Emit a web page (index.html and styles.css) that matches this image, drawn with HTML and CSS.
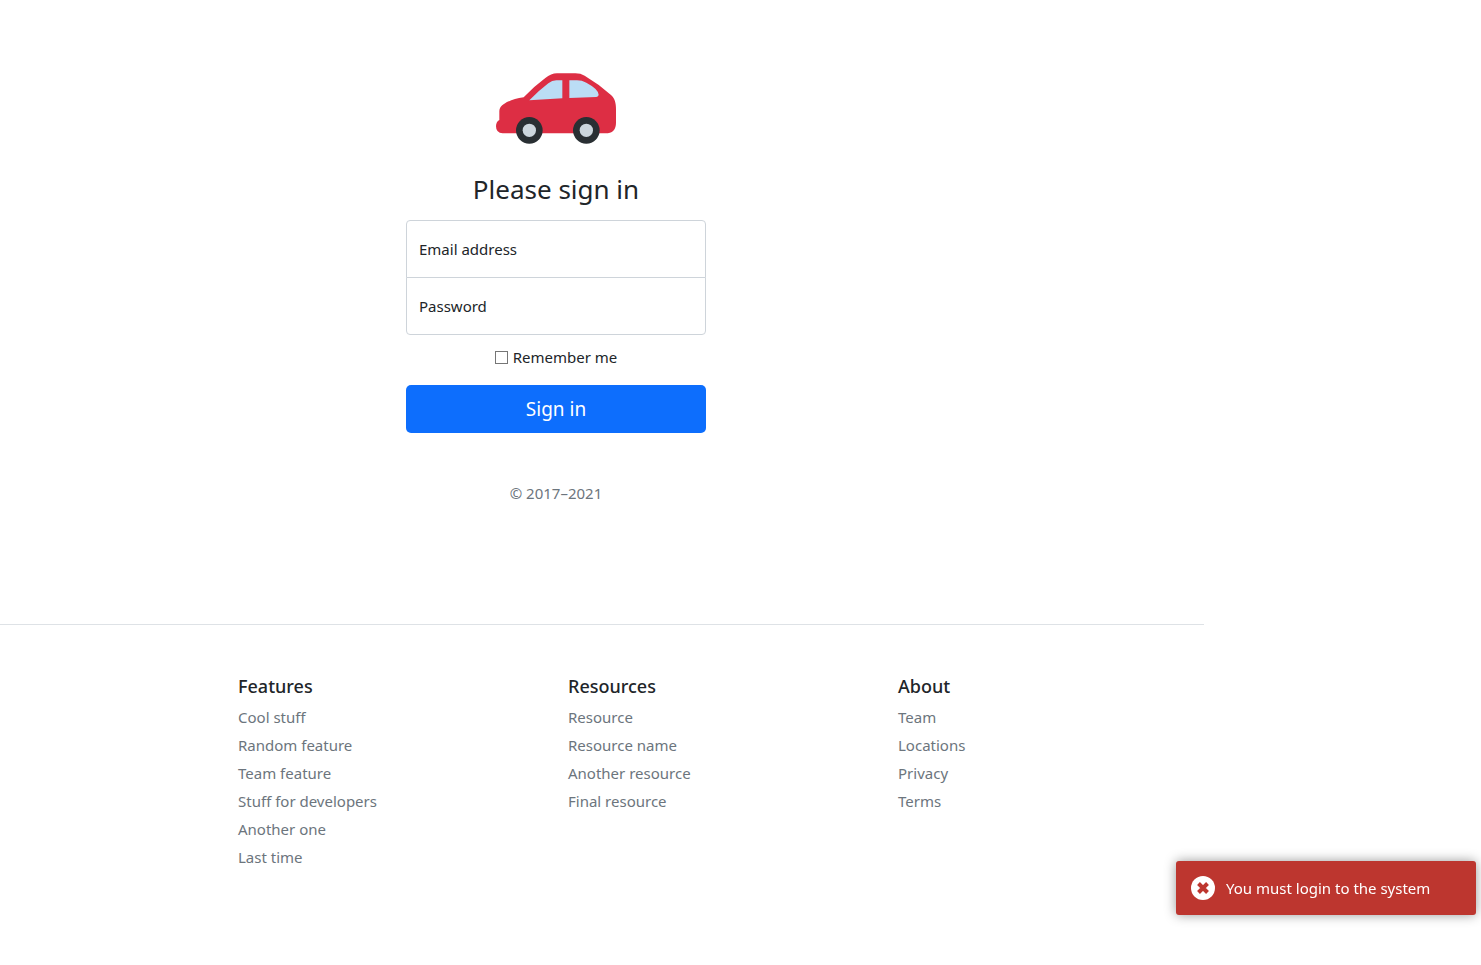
FILE: index.html
```html
<!DOCTYPE html>
<html lang="en">
<head>
<meta charset="utf-8">
<meta name="viewport" content="width=device-width, initial-scale=1">
<title>Sign in</title>
<link rel="stylesheet" href="styles.css">
</head>
<body>
<div class="page">
  <main class="signin">
    <form class="signin-form">
      <svg class="logo" viewBox="30 39 360 213" aria-hidden="true">
        <path fill="#dd2e44" d="M30 199Q30 185 40 180V153Q40 139 55 131Q75 118 113 112Q144 79 178 54Q195 40 213 40H268Q284 40 296 47Q337 71 374 104C386 114 390 128 390 148V188Q390 220 358 220H50Q30 219 30 199Z"/>
        <path fill="#bbddf5" d="M130 121Q158 92 187 70Q198 61 211 61H229V115ZM250 61H273Q288 61 301 68Q337 87 338 104Q338 110 331 111L250 114Z"/>
        <circle fill="#292f33" cx="130" cy="211" r="40"/>
        <circle fill="#292f33" cx="301" cy="211" r="40"/>
        <circle fill="#ccd6dd" cx="130" cy="211" r="20"/>
        <circle fill="#ccd6dd" cx="301" cy="211" r="20"/>
      </svg>
      <h1 class="title">Please sign in</h1>
      <div class="field field-first">
        <input class="field-input" type="email" id="email">
        <label class="field-label" for="email">Email address</label>
      </div>
      <div class="field field-last">
        <input class="field-input" type="password" id="password">
        <label class="field-label" for="password">Password</label>
      </div>
      <label class="remember"><input class="remember-box" type="checkbox">Remember me</label>
      <button class="submit" type="submit">Sign in</button>
      <p class="copyright">© 2017–2021</p>
    </form>
  </main>
  <footer class="footer">
    <section>
      <h2 class="footer-title">Features</h2>
      <ul class="footer-list">
        <li><a class="footer-link" href="#">Cool stuff</a></li>
        <li><a class="footer-link" href="#">Random feature</a></li>
        <li><a class="footer-link" href="#">Team feature</a></li>
        <li><a class="footer-link" href="#">Stuff for developers</a></li>
        <li><a class="footer-link" href="#">Another one</a></li>
        <li><a class="footer-link" href="#">Last time</a></li>
      </ul>
    </section>
    <section>
      <h2 class="footer-title">Resources</h2>
      <ul class="footer-list">
        <li><a class="footer-link" href="#">Resource</a></li>
        <li><a class="footer-link" href="#">Resource name</a></li>
        <li><a class="footer-link" href="#">Another resource</a></li>
        <li><a class="footer-link" href="#">Final resource</a></li>
      </ul>
    </section>
    <section>
      <h2 class="footer-title">About</h2>
      <ul class="footer-list">
        <li><a class="footer-link" href="#">Team</a></li>
        <li><a class="footer-link" href="#">Locations</a></li>
        <li><a class="footer-link" href="#">Privacy</a></li>
        <li><a class="footer-link" href="#">Terms</a></li>
      </ul>
    </section>
  </footer>
</div>
<div class="toast" role="alert">
  <svg class="toast-icon" viewBox="0 0 24 24" aria-hidden="true">
    <circle cx="12" cy="12" r="12" fill="#fff"/>
    <path d="M7.5 7.5L16.5 16.5M16.5 7.5L7.5 16.5" stroke="#bd362f" stroke-width="4"/>
  </svg>
  <span>You must login to the system</span>
</div>
</body>
</html>
```
FILE: styles.css
```css
* {
  box-sizing: border-box;
}

body {
  margin: 0;
  background: #fff;
  color: #212529;
  font: 400 15px/24px "Segoe UI", "Noto Sans", "Open Sans", sans-serif;
}

.page {
  margin-right: 277px;
}

.signin {
  display: flex;
  justify-content: center;
  padding: 73px 92px 119px 0;
}

.signin-form {
  display: flex;
  flex-direction: column;
  width: 300px;
  text-align: center;
}

.logo {
  width: 120px;
  height: 71px;
  margin: 0 auto 28px;
}

.title {
  margin: 0 0 14px;
  font-size: 26px;
  font-weight: 400;
  line-height: 34px;
}

.field {
  position: relative;
}

.field-input {
  display: block;
  width: 100%;
  height: 58px;
  padding: 16px 12px;
  border: 1px solid #ced4da;
  border-radius: 4px;
  background: #fff;
  color: inherit;
  font: inherit;
}

.field-first .field-input {
  border-bottom-left-radius: 0;
  border-bottom-right-radius: 0;
}

.field-last {
  margin-top: -1px;
}

.field-last .field-input {
  border-top-left-radius: 0;
  border-top-right-radius: 0;
}

.field-label {
  position: absolute;
  top: 17px;
  left: 13px;
}

.remember {
  display: flex;
  align-items: center;
  justify-content: center;
  gap: 5px;
  margin: 10px 0 16px;
}

.remember-box {
  appearance: none;
  width: 13px;
  height: 13px;
  margin: 0;
  border: 1px solid #767676;
  background: #fff;
}

.remember-box:checked {
  background: #0d6efd;
}

.submit {
  height: 48px;
  border: 0;
  border-radius: 5px;
  background: #0d6efd;
  color: #fff;
  font: inherit;
  font-size: 19px;
}

.copyright {
  margin: 48px 0 0;
  color: #6c757d;
}

.footer {
  display: grid;
  grid-template-columns: repeat(3, 1fr);
  column-gap: 24px;
  padding: 49px 0 48px 238px;
  border-top: 1px solid #dee2e6;
}

.footer-title {
  margin: 0 0 7px;
  font-size: 18px;
  font-weight: 500;
  line-height: 24px;
}

.footer-list {
  display: grid;
  gap: 4px;
  margin: 0;
  padding: 0;
  list-style: none;
}

.footer-link {
  color: #6c757d;
  text-decoration: none;
}

.toast {
  position: fixed;
  right: 5px;
  bottom: 50px;
  display: flex;
  align-items: center;
  gap: 11px;
  width: 300px;
  padding: 15px;
  border-radius: 3px;
  background: #bd362f;
  box-shadow: 0 0 12px #999;
  color: #fff;
}

.toast-icon {
  width: 24px;
  height: 24px;
}
```
